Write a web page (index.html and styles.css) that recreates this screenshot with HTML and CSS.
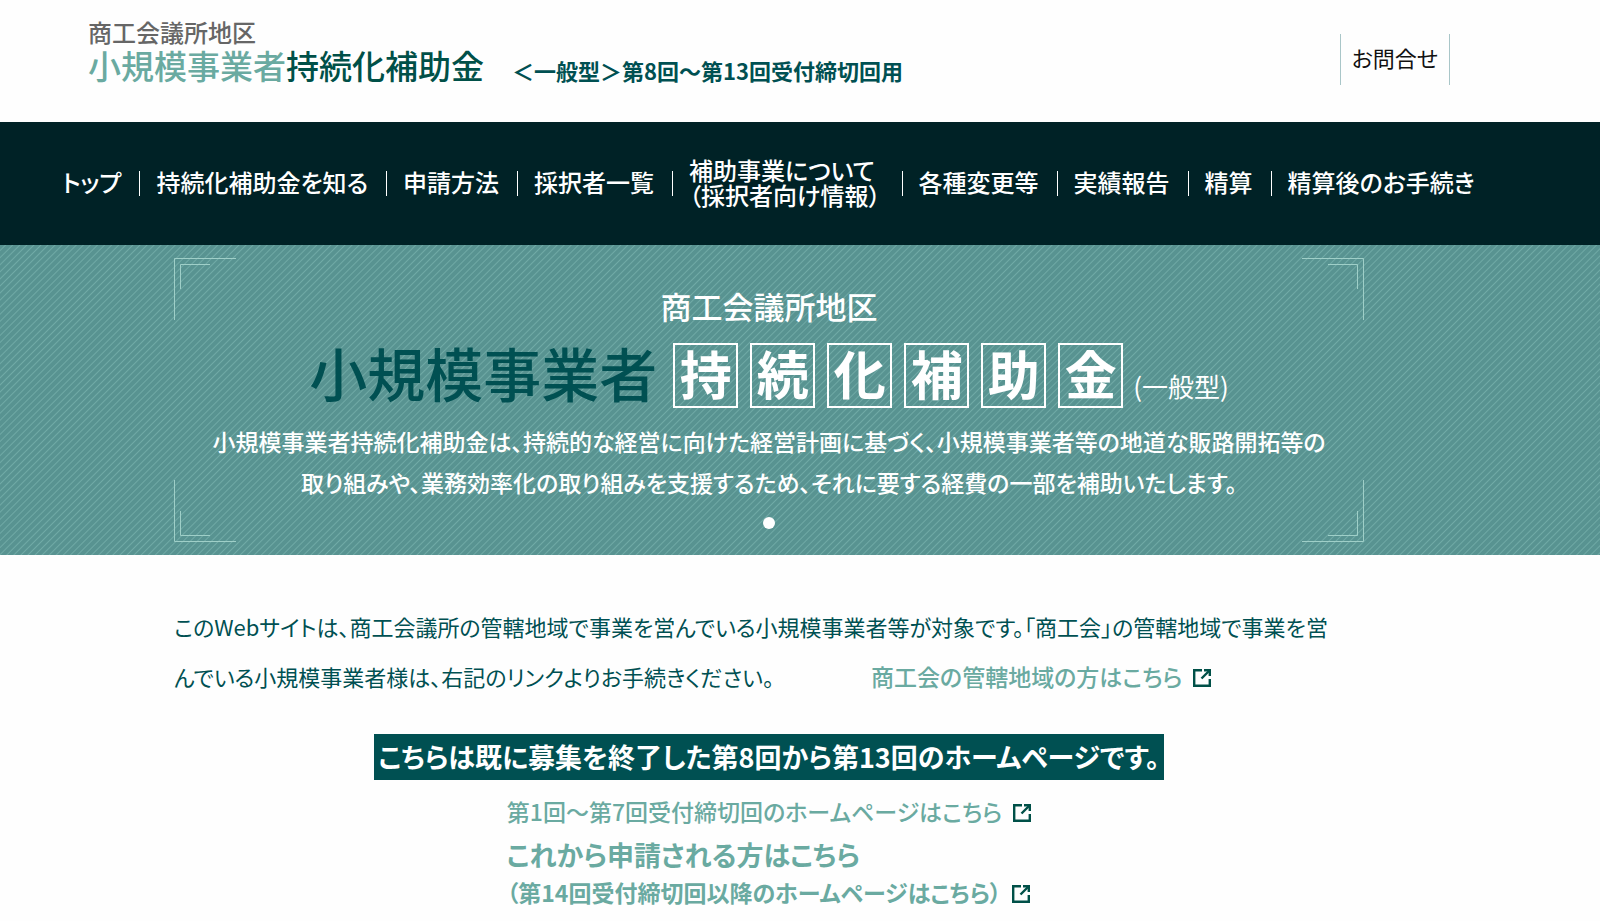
FILE: index.html
```
<!DOCTYPE html>
<html lang="ja">
<head>
    <meta charset="UTF-8">
    <meta name="viewport" content="width=device-width, initial-scale=1.0">
    <title>小規模事業者持続化補助金</title>
    <link rel="stylesheet" href="styles.css">
</head>
<body>
    <svg class="symbols" aria-hidden="true">
        <symbol id="external" viewBox="0 0 18 18">
            <path d="M9 1.2H1.2V16.8H16.8V10" fill="none" stroke="currentColor" stroke-width="2.4"/>
            <path d="M8.5 9.5L16 2" fill="none" stroke="currentColor" stroke-width="2.4"/>
            <path d="M11 0H18V7H15.6V2.4H11Z" fill="currentColor"/>
        </symbol>
    </svg>

    <header class="header">
        <a class="logo" href="#">
            <span class="logo-area">商工会議所地区</span>
            <span class="logo-name"><span class="logo-light">小規模事業者</span>持続化補助金</span>
        </a>
        <p class="header-note">＜一般型＞第8回～第13回受付締切回用</p>
        <a class="contact" href="#">お問合せ</a>
    </header>

    <nav class="nav">
        <ul>
            <li><a href="#">トップ</a></li>
            <li><a href="#">持続化補助金を知る</a></li>
            <li><a href="#">申請方法</a></li>
            <li><a href="#">採択者一覧</a></li>
            <li class="two-line"><a href="#">補助事業について<br>（採択者向け情報）</a></li>
            <li><a href="#">各種変更等</a></li>
            <li><a href="#">実績報告</a></li>
            <li><a href="#">精算</a></li>
            <li><a href="#">精算後のお手続き</a></li>
        </ul>
    </nav>

    <section class="hero">
        <div class="hero-frame">
            <svg class="corner top-left" viewBox="0 0 62 62"><path d="M62 .5H.5V62M36 6.5H6.5V31"/></svg>
            <svg class="corner top-right" viewBox="0 0 62 62"><path d="M62 .5H.5V62M36 6.5H6.5V31"/></svg>
            <svg class="corner bottom-left" viewBox="0 0 62 62"><path d="M62 .5H.5V62M36 6.5H6.5V31"/></svg>
            <svg class="corner bottom-right" viewBox="0 0 62 62"><path d="M62 .5H.5V62M36 6.5H6.5V31"/></svg>
            <p class="hero-area">商工会議所地区</p>
            <h1 class="hero-title">
                <span class="hero-name">小規模事業者</span>
                <span class="boxes"><span>持</span><span>続</span><span>化</span><span>補</span><span>助</span><span>金</span></span>
                <span class="hero-type">(一般型)</span>
            </h1>
            <p class="hero-text">小規模事業者持続化補助金は、持続的な経営に向けた経営計画に基づく、小規模事業者等の地道な販路開拓等の<br>取り組みや、業務効率化の取り組みを支援するため、それに要する経費の一部を補助いたします。</p>
            <button class="dot" type="button" aria-label="1"></button>
        </div>
    </section>

    <main class="main">
        <p class="lead">このWebサイトは、商工会議所の管轄地域で事業を営んでいる小規模事業者等が対象です。「商工会」の管轄地域で事業を営<br>んでいる小規模事業者様は、右記のリンクよりお手続きください。<a class="lead-link" href="#">商工会の管轄地域の方はこちら<svg class="icon"><use href="#external"/></svg></a></p>
        <h2 class="banner">こちらは既に募集を終了した第8回から第13回のホームページです。</h2>
        <div class="links">
            <a class="link-old" href="#">第1回～第7回受付締切回のホームページはこちら<svg class="icon"><use href="#external"/></svg></a>
            <a class="link-new" href="#"><span class="link-large">これから申請される方はこちら</span><br>（第14回受付締切回以降のホームページはこちら）<svg class="icon"><use href="#external"/></svg></a>
        </div>
    </main>
</body>
</html>
```
FILE: styles.css
```
* {
    box-sizing: border-box;
}
body {
    margin: 0;
    background-color: #fefefe;
    color: #005052;
    font-family: "Noto Sans CJK JP", sans-serif;
    font-size: 22px;
    font-feature-settings: "palt";
}
p, h1, h2, ul {
    margin: 0;
    padding: 0;
}
a {
    color: inherit;
    text-decoration: none;
}
.symbols {
    display: none;
}
.header {
    display: flex;
    align-items: flex-start;
    height: 122px;
    padding: 18px 150px 0 88px;
}
.logo {
    display: flex;
    flex-direction: column;
}
.logo-area {
    color: #666;
    font-size: 24px;
    font-weight: 500;
    line-height: 28px;
}
.logo-name {
    color: #005048;
    font-size: 33px;
    font-weight: 500;
    line-height: 38px;
}
.logo-light {
    color: #6aaaa1;
}
.header-note {
    margin: 36px 0 0 28px;
    font-weight: bold;
    line-height: 32px;
}
.contact {
    margin: 16px 0 0 auto;
    padding: 0 11px 4px;
    border: solid #a9c6c8;
    border-width: 0 1px;
    color: #111;
    line-height: 47px;
}
.nav {
    background-color: #002226;
    color: #fff;
}
.nav ul {
    display: flex;
    align-items: center;
    height: 123px;
    padding-left: 62px;
    list-style: none;
}
.nav li {
    padding-right: 18px;
    font-size: 24px;
    font-weight: 500;
    line-height: 25px;
    white-space: nowrap;
}
.nav li + li {
    padding-left: 17px;
    background: linear-gradient(#fff, #fff) left center / 1px 25px no-repeat;
}
.nav a {
    display: block;
    padding-bottom: 4px;
}
.nav .two-line {
    padding-right: 21px;
}
.hero {
    padding: 13px 62px 13px 0;
    background: #5a9593 repeating-linear-gradient(135deg, #589391 0, #589391 3px, #70aaa6 4px, #589391 5px);
    color: #fff;
}
.hero-frame {
    position: relative;
    display: flex;
    flex-direction: column;
    align-items: center;
    max-width: 1190px;
    height: 284px;
    margin: 0 auto;
    padding-top: 26px;
}
.corner {
    position: absolute;
    width: 62px;
    height: 62px;
    fill: none;
    stroke: #9fcfc8;
}
.top-left {
    top: 0;
    left: 0;
}
.top-right {
    top: 0;
    right: 0;
    transform: scaleX(-1);
}
.bottom-left {
    bottom: 0;
    left: 0;
    transform: scaleY(-1);
}
.bottom-right {
    right: 0;
    bottom: 0;
    transform: scale(-1);
}
.hero-area {
    font-size: 31px;
    font-weight: 500;
    line-height: 44px;
}
.hero-title {
    display: flex;
    align-items: flex-end;
    margin-top: 8px;
    font-weight: 500;
}
.hero-name {
    margin-right: 16px;
    color: #005052;
    font-size: 58px;
    line-height: 72px;
}
.boxes {
    display: flex;
    gap: 12px;
}
.boxes span {
    width: 65px;
    height: 65px;
    border: 2px solid #fff;
    font-size: 52px;
    font-weight: bold;
    line-height: 56px;
    text-align: center;
}
.hero-type {
    margin-left: 10px;
    font-size: 26px;
    font-weight: normal;
    line-height: 44px;
}
.hero-text {
    margin-top: 13px;
    font-size: 23px;
    font-weight: 500;
    line-height: 41px;
    text-align: center;
    white-space: nowrap;
}
.dot {
    width: 12px;
    height: 12px;
    margin-top: 14px;
    padding: 0;
    border: none;
    border-radius: 50%;
    background-color: #fff;
}
.main {
    display: flex;
    flex-direction: column;
    align-items: center;
    padding: 46px 62px 10px 0;
}
.lead {
    width: 100%;
    max-width: 1190px;
    line-height: 50px;
    white-space: nowrap;
}
.lead-link {
    margin-left: 97px;
    color: #6aaaa1;
    font-size: 23px;
    font-weight: 500;
}
.icon {
    width: 18px;
    height: 18px;
    margin-left: 11px;
    color: #005048;
    vertical-align: -1px;
}
.banner {
    margin-top: 33px;
    padding: 0 4px;
    background-color: #005052;
    color: #fff;
    font-size: 27px;
    line-height: 46px;
}
.links {
    display: flex;
    flex-direction: column;
    color: #6aaaa1;
    font-size: 23px;
}
.link-old {
    margin-top: 10px;
    font-weight: 500;
    line-height: 42px;
}
.link-new {
    margin-top: 5px;
    font-weight: bold;
    line-height: 36px;
}
.link-large {
    font-size: 27px;
}
```
